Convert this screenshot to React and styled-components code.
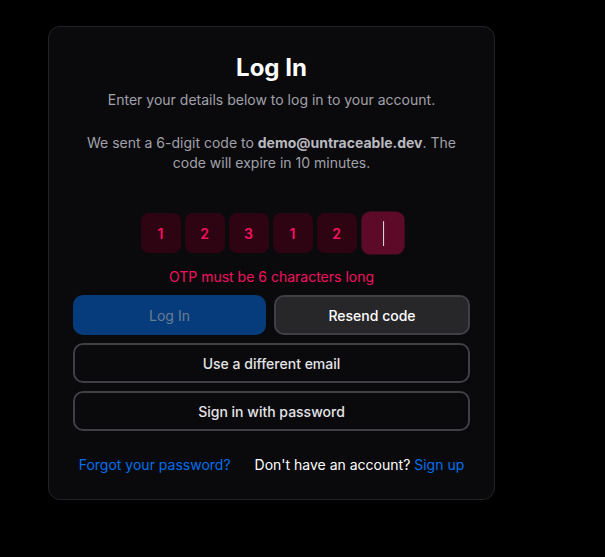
import React from 'react';
import styled, { createGlobalStyle } from 'styled-components';

const GlobalStyle = createGlobalStyle`
  html, body {
    margin: 0;
    background: #000000;
    font-family: Inter, "Noto Sans", sans-serif;
  }
`;

// page holds the card at the top left
const Page = styled.div`
  padding: 26px 0 0 48px;
`;

const Card = styled.div`
  width: 397px;
  padding: 25px 24px 24px 24px;
  background: #0a0a0c;
  border: 1px solid #232327;
  border-radius: 12px;
  display: flex;
  flex-direction: column;
  align-items: stretch;
`;

const Title = styled.h1`
  margin: 0;
  font-size: 24px;
  line-height: 32px;
  font-weight: 700;
  color: #ffffff;
  text-align: center;
`;

const Subtitle = styled.p`
  margin: 6px 0 0;
  font-size: 14px;
  line-height: 20px;
  color: #a1a1aa;
  text-align: center;
`;

const Notice = styled.p`
  margin: 23px 0 0;
  padding: 0 12px;
  font-size: 14px;
  line-height: 20px;
  color: #a1a1aa;
  text-align: center;

  strong {
    color: #b9b9c0;
    font-weight: 700;
  }
`;

const OtpRow = styled.div`
  margin-top: 40px;
  display: flex;
  justify-content: center;
  gap: 4px;
`;

const OtpBox = styled.div`
  width: 40px;
  height: 40px;
  border-radius: 8px;
  background: ${(p) => (p.$active ? '#5c0a27' : '#2f0412')};
  color: #f31260;
  font-size: 14px;
  font-weight: 600;
  display: flex;
  align-items: center;
  justify-content: center;
  transform: ${(p) => (p.$active ? 'scale(1.08)' : 'none')};
  margin-left: ${(p) => (p.$active ? '2px' : '0')};
`;

const Caret = styled.span`
  width: 1px;
  height: 23px;
  background: #d4d4d8;
`;

const ErrorText = styled.div`
  margin-top: 14px;
  font-size: 14px;
  line-height: 20px;
  color: #f31260;
  text-align: center;
`;

const ButtonRow = styled.div`
  margin-top: 8px;
  display: grid;
  grid-template-columns: 193px 1fr;
  gap: 8px;
`;

const Button = styled.button`
  box-sizing: border-box;
  height: 40px;
  width: 100%;
  border-radius: 10px;
  font-family: inherit;
  font-size: 14px;
  font-weight: ${(p) => (p.$variant === 'primary' ? 400 : 450)};
  cursor: pointer;
  margin-top: ${(p) => (p.$stacked ? '8px' : '0')};
  border: ${(p) => (p.$variant === 'primary' ? 'none' : '2px solid #3f3f46')};
  background: ${(p) =>
    p.$variant === 'primary' ? '#063c7b' : p.$variant === 'flat' ? '#27272a' : 'transparent'};
  color: ${(p) => (p.$variant === 'primary' ? '#6c7d93' : p.$variant === 'flat' ? '#ffffff' : '#e4e4e7')};
`;

const Footer = styled.div`
  margin-top: 24px;
  display: flex;
  justify-content: center;
  gap: 24px;
  font-size: 14px;
  line-height: 20px;
  color: #ffffff;
`;

const Link = styled.a`
  color: #006fee;
  text-decoration: none;
  cursor: pointer;
`;

const App = () => {
  const digits = ['1', '2', '3', '1', '2'];
  return (
    <>
      <GlobalStyle />
      <Page>
        <Card>
          <Title>Log In</Title>
          <Subtitle>Enter your details below to log in to your account.</Subtitle>
          <Notice>
            We sent a 6-digit code to <strong>demo@untraceable.dev</strong>. The code will expire in 10 minutes.
          </Notice>
          <OtpRow>
            {digits.map((d, i) => (
              <OtpBox key={i}>{d}</OtpBox>
            ))}
            <OtpBox $active>
              <Caret />
            </OtpBox>
          </OtpRow>
          <ErrorText>OTP must be 6 characters long</ErrorText>
          <ButtonRow>
            <Button $variant="primary">Log In</Button>
            <Button $variant="flat">Resend code</Button>
          </ButtonRow>
          <Button $variant="bordered" $stacked>Use a different email</Button>
          <Button $variant="bordered" $stacked>Sign in with password</Button>
          <Footer>
            <Link>Forgot your password?</Link>
            <span>
              Don't have an account? <Link>Sign up</Link>
            </span>
          </Footer>
        </Card>
      </Page>
    </>
  );
};

export default App;
